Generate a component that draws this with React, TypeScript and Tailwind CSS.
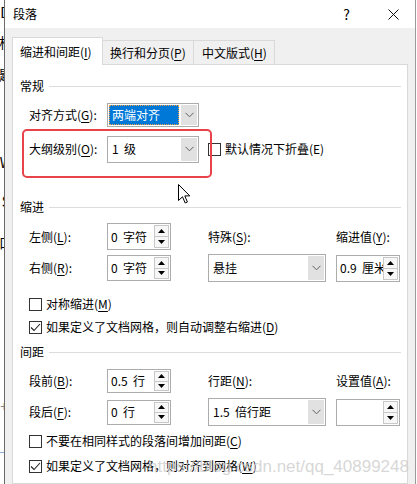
import React from "react";

const font = "font-['Microsoft_YaHei_UI','Noto_Sans_CJK_SC',sans-serif]";

function Key({ k }: { k: string }) {
  return (
    <>
      (<u className="underline-offset-2">{k}</u>)
    </>
  );
}

function Chevron() {
  return (
    <svg width="9" height="6" viewBox="0 0 9 6" className="text-[#606060]">
      <path d="M0.5 0.8 L4.5 4.8 L8.5 0.8" fill="none" stroke="currentColor" strokeWidth="1" />
    </svg>
  );
}

function SpinButtons() {
  return (
    <div className="mr-px flex h-full w-[15px] flex-col py-px">
      <div className="flex flex-1 items-center justify-center border border-[#c8c8c8] bg-[#f7f7f7]">
        <svg width="7" height="4" viewBox="0 0 7 4">
          <path d="M0 4 L3.5 0 L7 4 Z" fill="#000" />
        </svg>
      </div>
      <div className="flex flex-1 items-center justify-center border border-t-0 border-[#c8c8c8] bg-[#f7f7f7]">
        <svg width="7" height="4" viewBox="0 0 7 4">
          <path d="M0 0 L3.5 4 L7 0 Z" fill="#000" />
        </svg>
      </div>
    </div>
  );
}

function Spin({ value, className }: { value: string; className: string }) {
  return (
    <div className={`flex items-center border border-[#acacac] bg-white ${className}`}>
      <span className="flex-1 overflow-hidden whitespace-pre pl-[3px] text-[12px] text-black">{value}</span>
      <SpinButtons />
    </div>
  );
}

function Select({ value, className, focused }: { value: string; className: string; focused?: boolean }) {
  return (
    <div className={`flex items-stretch border border-[#acacac] bg-white ${className}`}>
      <div className="flex flex-1 items-center p-px">
        {focused ? (
          <span className="flex h-full w-full items-center border border-dotted border-[#f0a040] bg-[#0078d7] pl-[2px] text-[12px] text-white">
            {value}
          </span>
        ) : (
          <span className="whitespace-pre pl-[3px] text-[12px] text-black">{value}</span>
        )}
      </div>
      <div className="m-px flex w-[16px] items-center justify-center bg-[#e1e1e1]">
        <Chevron />
      </div>
    </div>
  );
}

function Check({ checked, children }: { checked?: boolean; children: React.ReactNode }) {
  return (
    <div className="ml-[9px] flex h-[20px] items-center">
      <div className="flex h-[13px] w-[13px] items-center justify-center border border-[#333] bg-white">
        {checked && (
          <svg width="11" height="9" viewBox="0 0 11 9">
            <path d="M1 4.5 L4 7.5 L10 1" fill="none" stroke="#222" strokeWidth="1.1" />
          </svg>
        )}
      </div>
      <span className="ml-[4px] text-[12px] text-black">{children}</span>
    </div>
  );
}

function Section({ title, className }: { title: string; className: string }) {
  return (
    <div className={`flex h-[16px] items-center ${className}`}>
      <span className="text-[12px] text-black">{title}</span>
      <div className="ml-[5px] h-px flex-1 bg-[#dcdcdc]" />
    </div>
  );
}

export default function App() {
  return (
    <div className={`flex h-[484px] w-[417px] overflow-hidden bg-white ${font}`}>
      {/* 背后的文档 */}
      <div className="relative w-[5px] overflow-hidden border-r border-[#6b6b6b] bg-white text-[14px] text-black">
        <span className="absolute right-[-6px] top-[2px]">D</span>
        <span className="absolute right-[-9px] top-[32px]">析</span>
        <span className="absolute right-[-9px] top-[64px]">题</span>
        <span className="absolute right-[-8px] top-[152px]">W</span>
        <span className="absolute right-[-6px] top-[191px]">S</span>
        <span className="absolute right-[-9px] top-[232px]">口</span>
        <span className="absolute right-[-4px] top-[396px] text-[#888]">+</span>
        <div className="absolute left-0 right-0 top-[452px] h-px bg-[#8fb0d8]" />
      </div>

      {/* 对话框 */}
      <div className="flex w-[411px] flex-col border-r border-[#9a9a9a]">
        <div className="flex h-[28px] items-center bg-white pl-[8px]">
          <span className="text-[12px] text-black">段落</span>
          <span className="ml-auto text-[14px] text-black">?</span>
          <svg width="11" height="11" viewBox="0 0 11 11" className="ml-[38px] mr-[16px]">
            <path d="M0.5 0.5 L10.5 10.5 M10.5 0.5 L0.5 10.5" stroke="#111" strokeWidth="1" />
          </svg>
        </div>

        <div className="flex flex-1 flex-col overflow-hidden bg-[#f0f0f0] px-[7px] pt-[9px]">
          {/* 标签页 */}
          <div className="relative z-10 flex items-end">
            <div className="-mb-px flex h-[28px] w-[91px] items-center border border-b-0 border-[#d9d9d9] bg-white pl-[7px] text-[12px] text-black">
              缩进和间距<Key k="I" />
            </div>
            <div className="flex h-[24px] w-[91px] items-center border border-b-0 border-l-0 border-[#d9d9d9] bg-[#f0f0f0] pl-[7px] text-[12px] text-black">
              换行和分页<Key k="P" />
            </div>
            <div className="flex h-[24px] w-[81px] items-center border border-b-0 border-l-0 border-[#d9d9d9] bg-[#f0f0f0] pl-[8px] text-[12px] text-black">
              中文版式<Key k="H" />
            </div>
          </div>

          <div className="relative flex flex-1 flex-col border border-[#d9d9d9] bg-white pl-[7px] pr-[6px] pt-[13px]">
            <Section title="常规" className="" />

            <div className="ml-[9px] mt-[8px] flex h-[26px] items-center">
              <span className="w-[78px] text-[12px] text-black">
                对齐方式<Key k="G" />:
              </span>
              <Select value="两端对齐" focused className="h-[24px] w-[92px]" />
            </div>

            <div className="ml-[9px] flex h-[42px] items-center">
              <span className="w-[78px] text-[12px] text-black">
                大纲级别<Key k="O" />:
              </span>
              <Select value="1  级" className="h-[27px] w-[92px]" />
              <Check>默认情况下折叠(E)</Check>
            </div>

            <Section title="缩进" className="mt-[29px]" />

            <div className="ml-[9px] mt-[7px] flex h-[29px] items-center">
              <span className="w-[78px] text-[12px] text-black">
                左侧<Key k="L" />:
              </span>
              <Spin value="0  字符" className="h-[27px] w-[64px]" />
              <span className="ml-[37px] w-[118px] text-[12px] text-black">
                特殊<Key k="S" />:
              </span>
              <span className="ml-[10px] text-[12px] text-black">
                缩进值<Key k="Y" />:
              </span>
            </div>

            <div className="ml-[9px] flex h-[34px] items-center">
              <span className="w-[78px] text-[12px] text-black">
                右侧<Key k="R" />:
              </span>
              <Spin value="0  字符" className="h-[26px] w-[64px]" />
              <Select value="悬挂" className="ml-[37px] h-[28px] w-[118px]" />
              <Spin value="0.9  厘米" className="ml-[10px] h-[27px] w-[64px]" />
            </div>

            <div className="mt-[9px]">
              <Check>
                对称缩进<Key k="M" />
              </Check>
            </div>
            <div className="mt-[3px]">
              <Check checked>
                如果定义了文档网格，则自动调整右缩进<Key k="D" />
              </Check>
            </div>

            <Section title="间距" className="mt-[7px]" />

            <div className="ml-[9px] mt-[7px] flex h-[28px] items-center">
              <span className="w-[78px] text-[12px] text-black">
                段前<Key k="B" />:
              </span>
              <Spin value="0.5  行" className="h-[24px] w-[64px]" />
              <span className="ml-[37px] w-[118px] text-[12px] text-black">
                行距<Key k="N" />:
              </span>
              <span className="ml-[10px] text-[12px] text-black">
                设置值<Key k="A" />:
              </span>
            </div>

            <div className="ml-[9px] mt-px flex h-[32px] items-center">
              <span className="w-[78px] text-[12px] text-black">
                段后<Key k="F" />:
              </span>
              <Spin value="0  行" className="h-[25px] w-[64px]" />
              <Select value="1.5  倍行距" className="ml-[37px] h-[28px] w-[118px]" />
              <Spin value="" className="ml-[10px] h-[27px] w-[64px]" />
            </div>

            <div className="mt-[3px]">
              <Check>
                不要在相同样式的段落间增加间距<Key k="C" />
              </Check>
            </div>
            <div className="mt-[5px]">
              <Check checked>
                如果定义了文档网格，则对齐到网格<Key k="W" />
              </Check>
            </div>

            {/* 标注框 */}
            <div className="pointer-events-none absolute left-[9px] top-[64px] h-[49px] w-[190px] rounded-[5px] border-2 border-[#e8434a]" />

            {/* 鼠标指针 */}
            <svg width="13" height="20" viewBox="0 0 13 20" className="absolute left-[165px] top-[119px]">
              <path d="M0.5 0.5 L0.5 16.5 L4.5 12.8 L7.2 19 L9.4 18 L6.8 11.9 L11.8 11.9 Z" fill="#fff" stroke="#000" strokeWidth="1" />
            </svg>

            {/* 水印 */}
            <span className="pointer-events-none absolute right-[-2px] top-[389px] font-['Liberation_Sans',sans-serif] text-[17px] text-[rgba(205,205,205,0.8)]">
              https://blog.csdn.net/qq_40899248
            </span>
          </div>
        </div>
      </div>
      <div className="w-px bg-white" />
    </div>
  );
}
